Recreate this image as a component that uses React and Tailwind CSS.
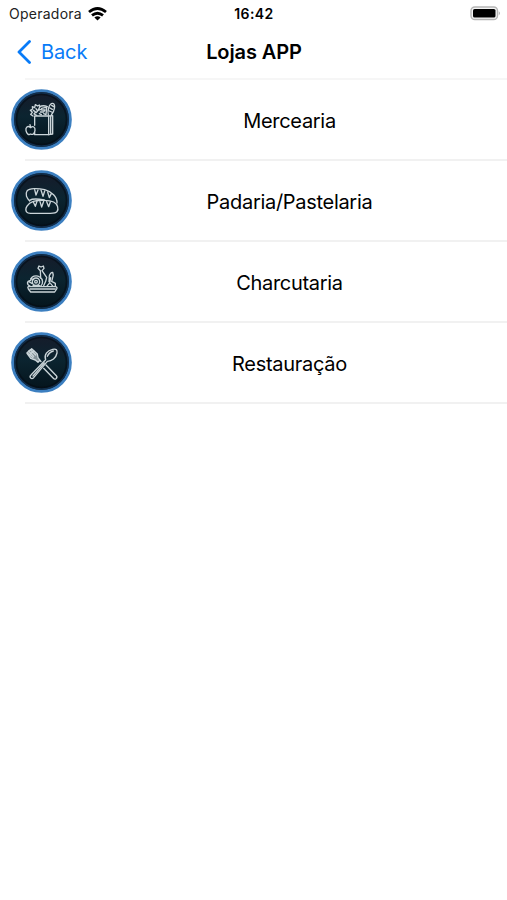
import { useState } from 'react';

// Groceries: paper bag with bread and greens, apple in front
function GroceryIcon() {
  return (
    <>
      <path d="M103 137 V109 H145 L157 108 V163 L145 165 H103 V159" />
      <path d="M145 109 V165 M151 110 V163" />
      <path d="M98 109 L91 104 L96 98 L90 92 L97 88 L96 81 L103 84 L105 75 L112 79 L117 76 L119 81 M99 92 L106 97 L101 103 L109 107 M107 87 L112 94 L107 99" />
      <path d="M117 82 Q128 75 141 81 M118 83 L113 92 L122 89 M124 86 L137 83 M124 91 H134 L130 97 H120 M117 102 L123 105 M130 102 L137 105 M139 82 L137 105" />
      <path d="M144 106 C140 93 147 70 157 71 C167 73 163 94 153 106 M149 85 L156 89 M147 94 L154 97 M154 77 L160 81" />
      <path d="M91 144 C82 136 75 144 77 153 C79 163 85 167 91 163 C98 167 103 160 104 152 C105 142 98 138 91 144 M91 144 L89 135" />
    </>
  );
}

// Two loaves stacked on each other
function BreadIcon() {
  return (
    <>
      <path d="M88 121 C79 113 74 100 80 91 C87 82 112 82 133 87 C154 93 171 108 170 127" />
      <path d="M79 154 C72 144 82 127 99 122 C119 117 146 118 160 124 C172 130 176 145 170 153 C167 158 159 158 150 158 H91 C84 158 81 157 79 154 Z" />
      <path d="M88 119 C98 112 117 115 132 118" />
      <path d="M103 87 L107 103 L113 88 M122 88 L128 107 L133 91 M142 94 L147 111 L153 99" />
      <path d="M99 124 L105 137 L110 122 M119 123 L124 139 L130 122 M139 123 L145 138 L150 124" />
    </>
  );
}

// Board with ham, bottle and sausage
function CharcuterieIcon() {
  return (
    <>
      <path d="M84 135 H166 Q172 137 169 142 L163 151 H91 L84 142 Q81 137 84 135 Z" />
      <path d="M89 142 H165" />
      <path d="M90 134 C78 128 79 118 91 116 C92 103 108 99 118 106 C129 112 129 127 121 134" />
      <circle cx="107" cy="120" r="11" />
      <circle cx="107" cy="120" r="4" />
      <path d="M86 120 L96 126 M92 111 L100 114 M98 132 L118 132" />
      <path d="M121 109 L120 87 L113 80 L116 73 L122 76 L129 73 L131 80 L125 87 L139 107 L136 119 L130 132" />
      <path d="M146 120 L147 102 Q151 91 157 92 Q160 98 157 108 L154 119 L165 125 V134 M151 108 L148 124 L139 134 M151 126 L158 134" />
    </>
  );
}

// Fork and spoon crossed
function CutleryIcon() {
  return (
    <>
      <path d="M80 90 L94 78 L111 94 L113 105 L119 113 L113 119 L105 112 L91 107 L80 92 Z" fill="#819096" />
      <path d="M85 85 L100 101 M90 81 L106 97 M82 92 L98 105 M87 97 L100 85" />
      <path d="M119 113 L122 117 M137 127 L168 159 Q172 164 167 168 Q163 171 159 167 L130 137" />
      <path d="M136 111 C130 97 141 83 157 80 C169 78 171 82 170 91 C167 106 155 116 141 116 L100 165 Q95 170 91 166 Q87 162 92 157 Z" />
      <path d="M141 101 C145 92 151 87 159 85 M98 160 L132 121" />
    </>
  );
}

const stores = [
  { id: 'mercearia', name: 'Mercearia', Icon: GroceryIcon },
  { id: 'padaria', name: 'Padaria/Pastelaria', Icon: BreadIcon },
  { id: 'charcutaria', name: 'Charcutaria', Icon: CharcuterieIcon },
  { id: 'restauracao', name: 'Restauração', Icon: CutleryIcon },
];

function StoreBadge({ id, children }) {
  return (
    <svg viewBox="32 28 183 183" className="h-[61px] w-[61px] shrink-0" aria-hidden="true">
      <defs>
        <linearGradient id={`bg-${id}`} x1="0" y1="0" x2="0" y2="1">
          <stop offset="0" stopColor="#171b2a" />
          <stop offset="0.45" stopColor="#0b2430" />
          <stop offset="1" stopColor="#04131b" />
        </linearGradient>
      </defs>
      <circle cx="123.5" cy="119.5" r="86.5" fill={`url(#bg-${id})`} stroke="#3c7fc0" strokeWidth="9" />
      <circle cx="123.5" cy="119.5" r="80" fill="none" stroke="#112c48" strokeWidth="5" />
      <circle cx="123.5" cy="119.5" r="75" fill="none" stroke="#050c14" strokeOpacity="0.6" strokeWidth="5" />
      <g fill="none" stroke="#cbd5d9" strokeWidth="4" strokeLinecap="round" strokeLinejoin="round">
        {children}
      </g>
    </svg>
  );
}

function StatusBar() {
  return (
    <div className="grid h-[27px] grid-cols-3 items-center pr-[6px] pl-[9px] text-[14px] text-[#222]">
      <div className="flex items-center gap-[6px]">
        <span className="tracking-[0.25px]">Operadora</span>
        <svg viewBox="0 0 19 14" className="h-[14px] w-[19px]" fill="none" stroke="#000" strokeWidth="2.8">
          <path d="M1 5 Q9.5 -2 18 5" />
          <path d="M4 8.4 Q9.5 4 15 8.4" />
          <path d="M6.4 10.4 Q9.5 8 12.6 10.4 L9.5 13.6 Z" fill="#000" stroke="none" />
        </svg>
      </div>
      <span className="-ml-[2px] text-center font-semibold tracking-[0.4px] text-black">16:42</span>
      <svg viewBox="0 0 31 15" className="h-[15px] w-[31px] justify-self-end">
        <rect x="1" y="1" width="26.5" height="12.5" rx="3.8" fill="#f4f4f4" stroke="#b5b5b5" strokeWidth="1.4" />
        <rect x="3" y="3" width="22.5" height="8.5" rx="1.6" fill="#000" />
        <path d="M28.8 5.2 Q31 7.2 28.8 9.2 Z" fill="#aaa" />
      </svg>
    </div>
  );
}

export default function App() {
  const [selected, setSelected] = useState(null);

  return (
    <div className="h-[900px] w-full overflow-hidden bg-white font-['Inter','Liberation_Sans',sans-serif] text-black">
      <StatusBar />

      {/* Navigation bar */}
      <header className="grid h-[51px] grid-cols-3 items-center pb-px">
        <button className="flex items-center gap-[10px] pl-[17px] text-[20px] tracking-[-0.1px] text-[#087bf8]">
          <svg viewBox="0 0 14 24" className="h-6 w-[14px]" fill="none" stroke="currentColor" strokeWidth="2.8">
            <path d="M12.5 1.5 L2 12 L12.5 22.5" strokeLinecap="round" strokeLinejoin="round" />
          </svg>
          Back
        </button>
        <h1 className="pl-px text-center text-[20px] font-semibold tracking-[-0.1px]">Lojas APP</h1>
      </header>
      <div className="ml-[25px] h-[2px] bg-[#f6f6f6]" />

      {/* Store list */}
      <ul>
        {stores.map(({ id, name, Icon }) => (
          <li key={id} aria-selected={selected === id} onClick={() => setSelected(id)}>
            <div className="flex h-[79px] items-center pl-[11px]">
              <StoreBadge id={id}>
                <Icon />
              </StoreBadge>
              <span className="flex-1 pt-[2px] text-center text-[20px] tracking-[-0.3px]">{name}</span>
            </div>
            <div className="ml-[25px] h-[2px] bg-[#f1f1f1]" />
          </li>
        ))}
      </ul>
    </div>
  );
}
